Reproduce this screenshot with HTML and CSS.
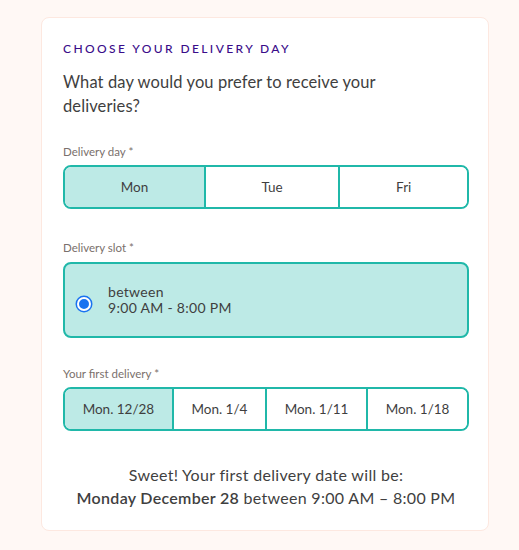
FILE: index.html
```html
<!DOCTYPE html>
<html>
<head>
<title>Delivery day</title>
<link rel="stylesheet" href="styles.css">
</head>
<body>

<form class="card" name="Delivery">
  <h2 class="title">CHOOSE YOUR DELIVERY DAY</h2>
  <p class="question">What day would you prefer to receive your deliveries?</p>

  <label class="field-label">Delivery day *</label>
  <div class="segments">
    <button type="button" class="seg selected">Mon</button>
    <button type="button" class="seg">Tue</button>
    <button type="button" class="seg">Fri</button>
  </div>

  <label class="field-label">Delivery slot *</label>
  <div class="slot">
    <span class="radio"></span>
    <span class="slot-text">between<br>9:00 AM - 8:00 PM</span>
  </div>

  <label class="field-label">Your first delivery *</label>
  <div class="segments">
    <button type="button" class="seg selected">Mon. 12/28</button>
    <button type="button" class="seg">Mon. 1/4</button>
    <button type="button" class="seg">Mon. 1/11</button>
    <button type="button" class="seg">Mon. 1/18</button>
  </div>

  <p class="summary">Sweet! Your first delivery date will be:<br>
    <b>Monday December 28</b> between 9:00 AM &ndash; 8:00 PM</p>
</form>

</body>
</html>
```

FILE: styles.css
```css
body {
    margin: 0;
    background-color: #fff8f5;
    font-family: Lato, "Noto Sans", sans-serif;
    color: #3f3f3f;
}

.card {
    margin: 17px 30px 20px 41px;
    padding: 21px 19px 21px 21px;
    background-color: #fff;
    border: 1px solid #fde8e0;
    border-radius: 8px;
}

.title {
    margin: 2px 0 0 0;
    font-size: 12px;
    font-weight: 500;
    letter-spacing: 2.4px;
    color: #3a0c8a;
}

.question {
    margin: 14px 0 0 0;
    max-width: 360px;
    font-size: 16.5px;
    line-height: 24px;
    letter-spacing: 0.1px;
}

.field-label {
    display: block;
    margin-top: 27px;
    font-size: 11.5px;
    color: #7a706c;
}

.segments {
    display: flex;
    margin-top: 7px;
    border: 2px solid #20b8a9;
    border-radius: 8px;
    overflow: hidden;
}

.seg {
    flex: 1 1 auto;
    height: 40px;
    padding: 0 10px;
    border: none;
    border-left: 2px solid #20b8a9;
    background-color: #fff;
    font-family: inherit;
    font-size: 13.5px;
    color: #3f3f3f;
    cursor: pointer;
}

.seg:first-child {
    border-left: none;
}

.seg.selected {
    background-color: #bdeae6;
}

.segments + .field-label {
    margin-top: 32px;
}

.slot {
    display: flex;
    align-items: center;
    height: 72px;
    margin-top: 8px;
    padding: 0 12px;
    background-color: #bdeae6;
    border: 2px solid #20b8a9;
    border-radius: 8px;
}

.radio {
    width: 10px;
    height: 10px;
    margin-top: 8px;
    border-radius: 50%;
    background-color: #1a73f0;
    border: 2px solid #fff;
    box-shadow: 0 0 0 1.5px #1a73f0;
}

.slot-text {
    margin-left: 17px;
    font-size: 14px;
    line-height: 16px;
    letter-spacing: 0.3px;
}

.slot + .field-label {
    margin-top: 29px;
}

.summary {
    margin: 32px 0 0 0;
    text-align: center;
    font-size: 16px;
    line-height: 23px;
    letter-spacing: 0.3px;
}

.summary b {
    font-weight: 600;
}
```
